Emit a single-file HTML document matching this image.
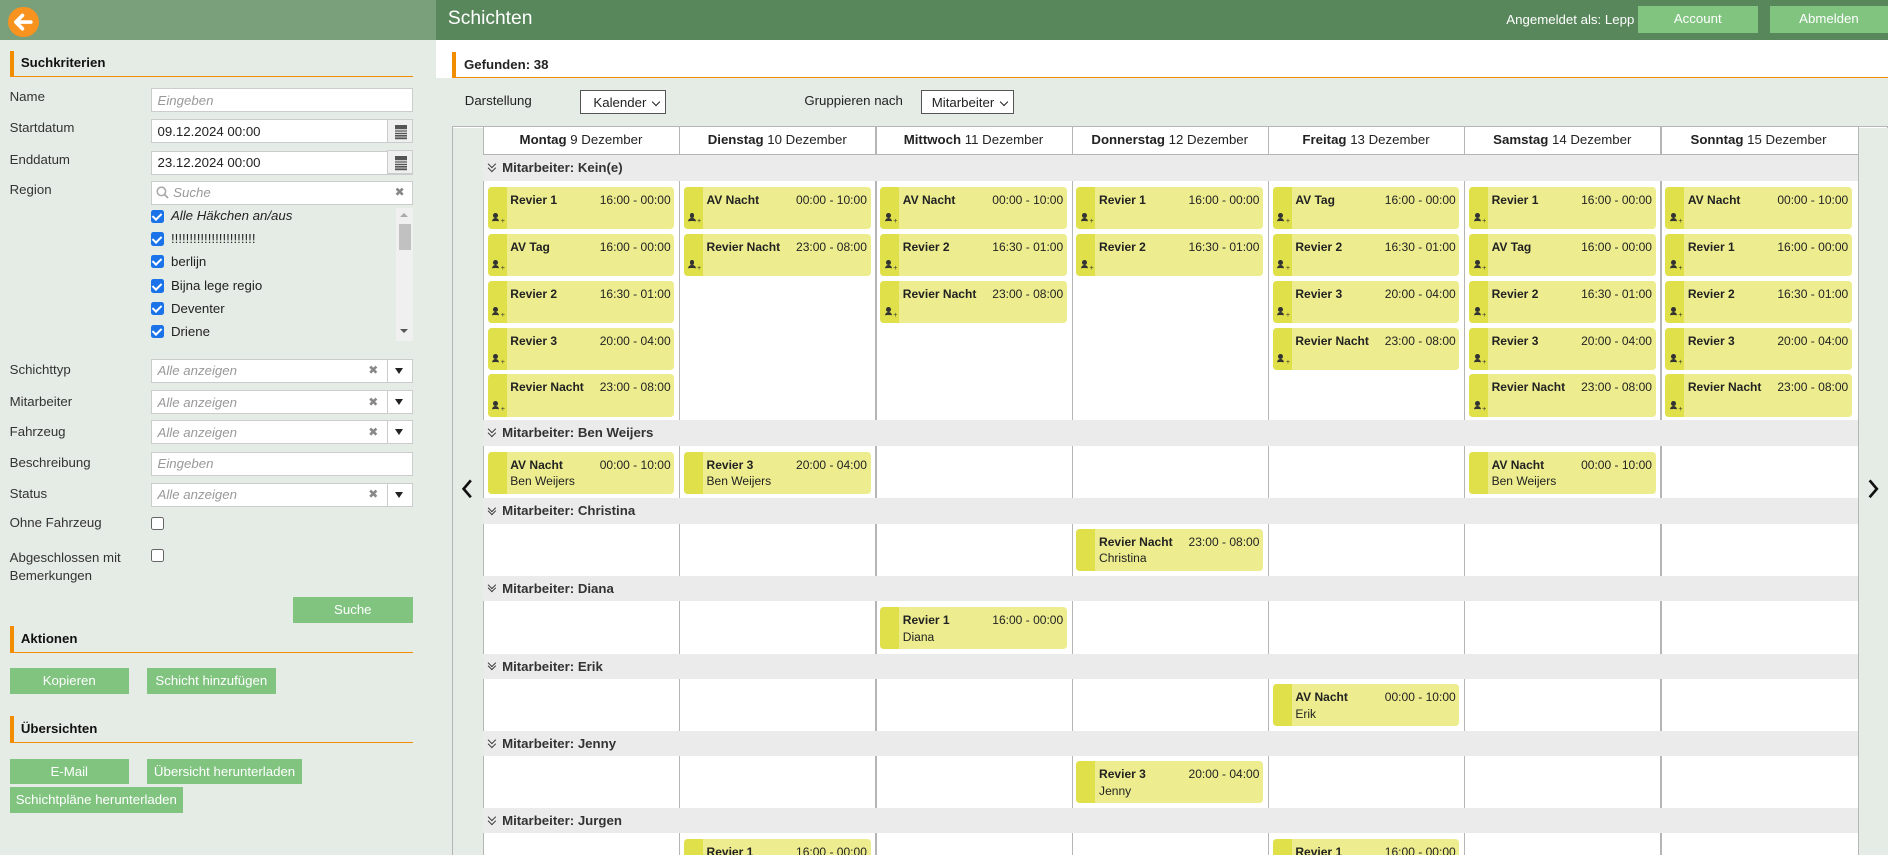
<!DOCTYPE html><html><head><meta charset="utf-8"><style>
*{box-sizing:border-box;margin:0;padding:0}
html,body{width:1888px;height:855px;overflow:hidden;background:#e5ebe5}
#w{zoom:1.20408;width:1568px;height:710px;position:relative;font-family:"Liberation Sans",sans-serif;font-size:11px;color:#222;overflow:hidden;white-space:nowrap}
.a{position:absolute}
.lb{position:absolute;left:8px;font-size:11px;color:#333}
.in{position:absolute;left:125px;width:218px;height:20px;background:#fff;border:1px solid #ccc;font-size:11px;padding:3px 5px;color:#222}
.ph{color:#999;font-style:italic}
.btn2{position:absolute;right:-1px;top:-1px;width:22px;height:20px;border:1px solid #ccc;background:#f0f0f0}
.btn2:before{content:"";position:absolute;left:6px;top:4px;width:10px;height:10px;background:repeating-linear-gradient(#555 0 1px,#ccc 1px 2px);border-top:3px solid #555}
.x{position:absolute;right:28px;top:3px;color:#888;font-size:10px;font-style:normal}
.dd{position:absolute;right:-1px;top:-1px;width:22px;height:20px;border:1px solid #ccc;background:#fff}
.dd:after{content:"";position:absolute;left:6px;top:7px;border:4px solid transparent;border-top:5px solid #222}
.sec{position:absolute;left:8px;width:335px;height:22px;border-left:4px solid #f28c00;border-bottom:1px solid #f28c00;font-weight:bold;padding:4px 6px;font-size:11px;color:#111}
.gb{position:absolute;background:#80c480;color:#fff;text-align:center;font-size:11px;line-height:21px;height:21px}
.cb{position:absolute;left:125px;width:11px;height:11px;background:#1a73e8;border-radius:2px}
.cb:after{content:"";position:absolute;left:3px;top:1px;width:3px;height:6px;border:solid #fff;border-width:0 2px 2px 0;transform:rotate(45deg)}
.ci{position:absolute;left:142px;font-size:11px;color:#222}
.ecb{position:absolute;left:125px;width:11px;height:11px;border:1px solid #666;background:#fff;border-radius:2px}
.vl{position:absolute;top:105px;width:1px;height:610px;background:#b5b5b5}
.dh{position:absolute;top:105px;height:23px;width:163px;text-align:center;font-size:11px;line-height:24px;color:#222}
.gh{position:absolute;left:401px;width:1142px;height:21px;background:#ebebeb;font-weight:bold;font-size:11px;line-height:21px;padding-left:16px;color:#333}
.gh:before{content:"";position:absolute;left:5px;top:5px;width:4px;height:4px;border:solid #333;border-width:0 1px 1px 0;transform:rotate(45deg);box-shadow:2px 2px 0 -0px transparent}
.gh:after{content:"";position:absolute;left:5px;top:8px;width:4px;height:4px;border:solid #333;border-width:0 1px 1px 0;transform:rotate(45deg)}
.c{position:absolute;width:155px;height:35px;background:#eded8f;border-radius:3px;border-left:16px solid #dfe04a;font-size:10px;color:#222}
.c b{position:absolute;left:3px;top:5px;font-size:10px}
.c span{position:absolute;right:3px;top:5px}
.c em{position:absolute;left:3px;top:19px;font-style:normal}
.c i{position:absolute;left:-12px;top:22px;width:10px;height:7px}
.c i:before{content:"";position:absolute;left:1px;top:0;width:4px;height:4px;border-radius:50%;background:#333}
.c i:after{content:"+";position:absolute;left:0;top:-3px;width:6px;height:3px;border-top:3px solid #333;border-radius:3px 3px 0 0;margin-top:7px;font-size:6px;line-height:0;text-indent:7px;color:#333}
</style></head><body><div id="w">
<div class="a" style="left:0;top:0;width:362px;height:33px;background:#7a9f7b"></div>
<div class="a" style="left:7px;top:6px;width:25px;height:25px;border-radius:50%;background:#f7931e"></div>
<svg class="a" style="left:7px;top:6px" width="25" height="25" viewBox="0 0 25 25"><path d="M19 12.5H7M12 7l-5.5 5.5L12 18" stroke="#fff" stroke-width="3" fill="none" stroke-linecap="round" stroke-linejoin="round"/></svg>
<div class="a" style="left:362px;top:0;width:1206px;height:33px;background:#58875b"></div>
<div class="a" style="left:372px;top:7px;color:#fff;font-size:16px">Schichten</div>
<div class="a" style="left:1251px;top:10px;color:#fff;font-size:11px">Angemeldet als: Lepp</div>
<div class="gb" style="left:1360px;top:5px;width:100px;height:22px;line-height:21px">Account</div>
<div class="gb" style="left:1470px;top:5px;width:98px;height:22px;line-height:21px">Abmelden</div>
<div class="sec" style="top:42px">Suchkriterien</div>
<div class="lb" style="top:74px">Name</div><div class="in ph" style="top:73px">Eingeben</div>
<div class="lb" style="top:100px">Startdatum</div><div class="in" style="top:99px">09.12.2024 00:00<div class="btn2"></div></div>
<div class="lb" style="top:126px">Enddatum</div><div class="in" style="top:125px">23.12.2024 00:00<div class="btn2"></div></div>
<div class="lb" style="top:151px">Region</div><div class="in ph" style="top:150px;padding-left:18px">Suche<svg class="a" style="left:4px;top:4px" width="11" height="11"><circle cx="4.5" cy="4.5" r="3.5" stroke="#aaa" fill="none" stroke-width="1.3"/><path d="M7 7l3 3" stroke="#aaa" stroke-width="1.5"/></svg><span class="x" style="right:6px">&#10006;</span></div>
<div class="a" style="left:329px;top:173px;width:14px;height:110px;background:#f0f0f0"></div>
<div class="a" style="left:331px;top:186px;width:10px;height:22px;background:#c1c1c1"></div>
<div class="a" style="left:332px;top:177px;border:4px solid transparent;border-bottom:4px solid #aaa;border-top:0"></div>
<div class="a" style="left:332px;top:273px;border:4px solid transparent;border-top:4px solid #555;border-bottom:0"></div>
<div class="cb" style="top:174px"></div><div class="ci ph" style="top:173px">Alle Häkchen an/aus</div>
<div class="cb" style="top:193px"></div><div class="ci" style="top:192px">!!!!!!!!!!!!!!!!!!!!!!!</div>
<div class="cb" style="top:212px"></div><div class="ci" style="top:211px">berlijn</div>
<div class="cb" style="top:232px"></div><div class="ci" style="top:231px">Bijna lege regio</div>
<div class="cb" style="top:251px"></div><div class="ci" style="top:250px">Deventer</div>
<div class="cb" style="top:270px"></div><div class="ci" style="top:269px">Driene</div>
<div class="lb" style="top:301px">Schichttyp</div><div class="in ph" style="top:298px">Alle anzeigen<span class="x">&#10006;</span><div class="dd"></div></div>
<div class="lb" style="top:327px">Mitarbeiter</div><div class="in ph" style="top:324px">Alle anzeigen<span class="x">&#10006;</span><div class="dd"></div></div>
<div class="lb" style="top:352px">Fahrzeug</div><div class="in ph" style="top:349px">Alle anzeigen<span class="x">&#10006;</span><div class="dd"></div></div>
<div class="lb" style="top:378px">Beschreibung</div><div class="in ph" style="top:375px">Eingeben</div>
<div class="lb" style="top:404px">Status</div><div class="in ph" style="top:401px">Alle anzeigen<span class="x">&#10006;</span><div class="dd"></div></div>
<div class="lb" style="top:428px">Ohne Fahrzeug</div><div class="ecb" style="top:429px"></div>
<div class="lb" style="top:456px;line-height:15px">Abgeschlossen mit<br>Bemerkungen</div><div class="ecb" style="top:456px"></div>
<div class="gb" style="left:243px;top:496px;width:100px">Suche</div>
<div class="sec" style="top:520px">Aktionen</div>
<div class="gb" style="left:8px;top:555px;width:99px">Kopieren</div>
<div class="gb" style="left:122px;top:555px;width:107px">Schicht hinzufügen</div>
<div class="sec" style="top:595px">Übersichten</div>
<div class="gb" style="left:8px;top:630px;width:99px">E-Mail</div>
<div class="gb" style="left:122px;top:630px;width:129px">Übersicht herunterladen</div>
<div class="gb" style="left:8px;top:654px;width:144px">Schichtpläne herunterladen</div>
<div class="a" style="left:362px;top:33px;width:1206px;height:32px;background:#fff"></div>
<div class="a" style="left:375px;top:43px;width:1193px;height:22px;border-left:4px solid #f28c00;border-bottom:1px solid #f28c00;font-weight:bold;padding:4px 7px;font-size:11px">Gefunden: 38</div>
<div class="a" style="left:386px;top:77px">Darstellung</div>
<div class="a" style="left:482px;top:75px;width:71px;height:20px;background:#fff;border:1px solid #555;padding:3px 0 0 10px;font-size:11px">Kalender<span class="a" style="right:5px;top:6px;width:5px;height:5px;border:solid #222;border-width:0 1.5px 1.5px 0;transform:rotate(45deg)"></span></div>
<div class="a" style="left:668px;top:77px">Gruppieren nach</div>
<div class="a" style="left:765px;top:75px;width:77px;height:20px;background:#fff;border:1px solid #555;padding:3px 0 0 8px;font-size:11px">Mitarbeiter<span class="a" style="right:5px;top:6px;width:5px;height:5px;border:solid #222;border-width:0 1.5px 1.5px 0;transform:rotate(45deg)"></span></div>
<div class="a" style="left:375px;top:105px;width:1193px;height:610px;background:#fff;border:1px solid #b5b5b5"></div>
<div class="a" style="left:376px;top:106px;width:25px;height:610px;background:#e5ebe5"></div>
<div class="a" style="left:1543px;top:106px;width:25px;height:610px;background:#e5ebe5"></div>
<svg class="a" style="left:382px;top:397px" width="12" height="18"><path d="M9 2L3 9l6 7" stroke="#111" stroke-width="2.2" fill="none"/></svg>
<svg class="a" style="left:1550px;top:397px" width="12" height="18"><path d="M3 2l6 7-6 7" stroke="#111" stroke-width="2.2" fill="none"/></svg>
<div class="vl" style="left:401px"></div><div class="vl" style="left:564px"></div><div class="vl" style="left:727px"></div><div class="vl" style="left:890px"></div><div class="vl" style="left:1053px"></div><div class="vl" style="left:1216px"></div><div class="vl" style="left:1379px"></div><div class="vl" style="left:1543px"></div>
<div class="a" style="left:401px;top:128px;width:1142px;height:1px;background:#b5b5b5"></div>
<div class="dh" style="left:401px"><b>Montag</b> 9 Dezember</div>
<div class="dh" style="left:564px"><b>Dienstag</b> 10 Dezember</div>
<div class="dh" style="left:727px"><b>Mittwoch</b> 11 Dezember</div>
<div class="dh" style="left:890px"><b>Donnerstag</b> 12 Dezember</div>
<div class="dh" style="left:1053px"><b>Freitag</b> 13 Dezember</div>
<div class="dh" style="left:1216px"><b>Samstag</b> 14 Dezember</div>
<div class="dh" style="left:1379px"><b>Sonntag</b> 15 Dezember</div>
<div class="gh" style="top:129px">Mitarbeiter: Kein(e)</div>
<div class="gh" style="top:349px">Mitarbeiter: Ben Weijers</div>
<div class="gh" style="top:414px">Mitarbeiter: Christina</div>
<div class="gh" style="top:478px">Mitarbeiter: Diana</div>
<div class="gh" style="top:543px">Mitarbeiter: Erik</div>
<div class="gh" style="top:607px">Mitarbeiter: Jenny</div>
<div class="gh" style="top:671px">Mitarbeiter: Jurgen</div>
<div class="c" style="left:405px;top:155px"><b>Revier 1</b><span>16:00 - 00:00</span><i></i></div>
<div class="c" style="left:405px;top:194px"><b>AV Tag</b><span>16:00 - 00:00</span><i></i></div>
<div class="c" style="left:405px;top:233px"><b>Revier 2</b><span>16:30 - 01:00</span><i></i></div>
<div class="c" style="left:405px;top:272px"><b>Revier 3</b><span>20:00 - 04:00</span><i></i></div>
<div class="c" style="left:405px;top:311px"><b>Revier Nacht</b><span>23:00 - 08:00</span><i></i></div>
<div class="c" style="left:568px;top:155px"><b>AV Nacht</b><span>00:00 - 10:00</span><i></i></div>
<div class="c" style="left:568px;top:194px"><b>Revier Nacht</b><span>23:00 - 08:00</span><i></i></div>
<div class="c" style="left:731px;top:155px"><b>AV Nacht</b><span>00:00 - 10:00</span><i></i></div>
<div class="c" style="left:731px;top:194px"><b>Revier 2</b><span>16:30 - 01:00</span><i></i></div>
<div class="c" style="left:731px;top:233px"><b>Revier Nacht</b><span>23:00 - 08:00</span><i></i></div>
<div class="c" style="left:894px;top:155px"><b>Revier 1</b><span>16:00 - 00:00</span><i></i></div>
<div class="c" style="left:894px;top:194px"><b>Revier 2</b><span>16:30 - 01:00</span><i></i></div>
<div class="c" style="left:1057px;top:155px"><b>AV Tag</b><span>16:00 - 00:00</span><i></i></div>
<div class="c" style="left:1057px;top:194px"><b>Revier 2</b><span>16:30 - 01:00</span><i></i></div>
<div class="c" style="left:1057px;top:233px"><b>Revier 3</b><span>20:00 - 04:00</span><i></i></div>
<div class="c" style="left:1057px;top:272px"><b>Revier Nacht</b><span>23:00 - 08:00</span><i></i></div>
<div class="c" style="left:1220px;top:155px"><b>Revier 1</b><span>16:00 - 00:00</span><i></i></div>
<div class="c" style="left:1220px;top:194px"><b>AV Tag</b><span>16:00 - 00:00</span><i></i></div>
<div class="c" style="left:1220px;top:233px"><b>Revier 2</b><span>16:30 - 01:00</span><i></i></div>
<div class="c" style="left:1220px;top:272px"><b>Revier 3</b><span>20:00 - 04:00</span><i></i></div>
<div class="c" style="left:1220px;top:311px"><b>Revier Nacht</b><span>23:00 - 08:00</span><i></i></div>
<div class="c" style="left:1383px;top:155px"><b>AV Nacht</b><span>00:00 - 10:00</span><i></i></div>
<div class="c" style="left:1383px;top:194px"><b>Revier 1</b><span>16:00 - 00:00</span><i></i></div>
<div class="c" style="left:1383px;top:233px"><b>Revier 2</b><span>16:30 - 01:00</span><i></i></div>
<div class="c" style="left:1383px;top:272px"><b>Revier 3</b><span>20:00 - 04:00</span><i></i></div>
<div class="c" style="left:1383px;top:311px"><b>Revier Nacht</b><span>23:00 - 08:00</span><i></i></div>
<div class="c" style="left:405px;top:375px"><b>AV Nacht</b><span>00:00 - 10:00</span><em>Ben Weijers</em></div>
<div class="c" style="left:568px;top:375px"><b>Revier 3</b><span>20:00 - 04:00</span><em>Ben Weijers</em></div>
<div class="c" style="left:1220px;top:375px"><b>AV Nacht</b><span>00:00 - 10:00</span><em>Ben Weijers</em></div>
<div class="c" style="left:894px;top:439px"><b>Revier Nacht</b><span>23:00 - 08:00</span><em>Christina</em></div>
<div class="c" style="left:731px;top:504px"><b>Revier 1</b><span>16:00 - 00:00</span><em>Diana</em></div>
<div class="c" style="left:1057px;top:568px"><b>AV Nacht</b><span>00:00 - 10:00</span><em>Erik</em></div>
<div class="c" style="left:894px;top:632px"><b>Revier 3</b><span>20:00 - 04:00</span><em>Jenny</em></div>
<div class="c" style="left:568px;top:697px"><b>Revier 1</b><span>16:00 - 00:00</span></div>
<div class="c" style="left:1057px;top:697px"><b>Revier 1</b><span>16:00 - 00:00</span></div>
</div></body></html>
